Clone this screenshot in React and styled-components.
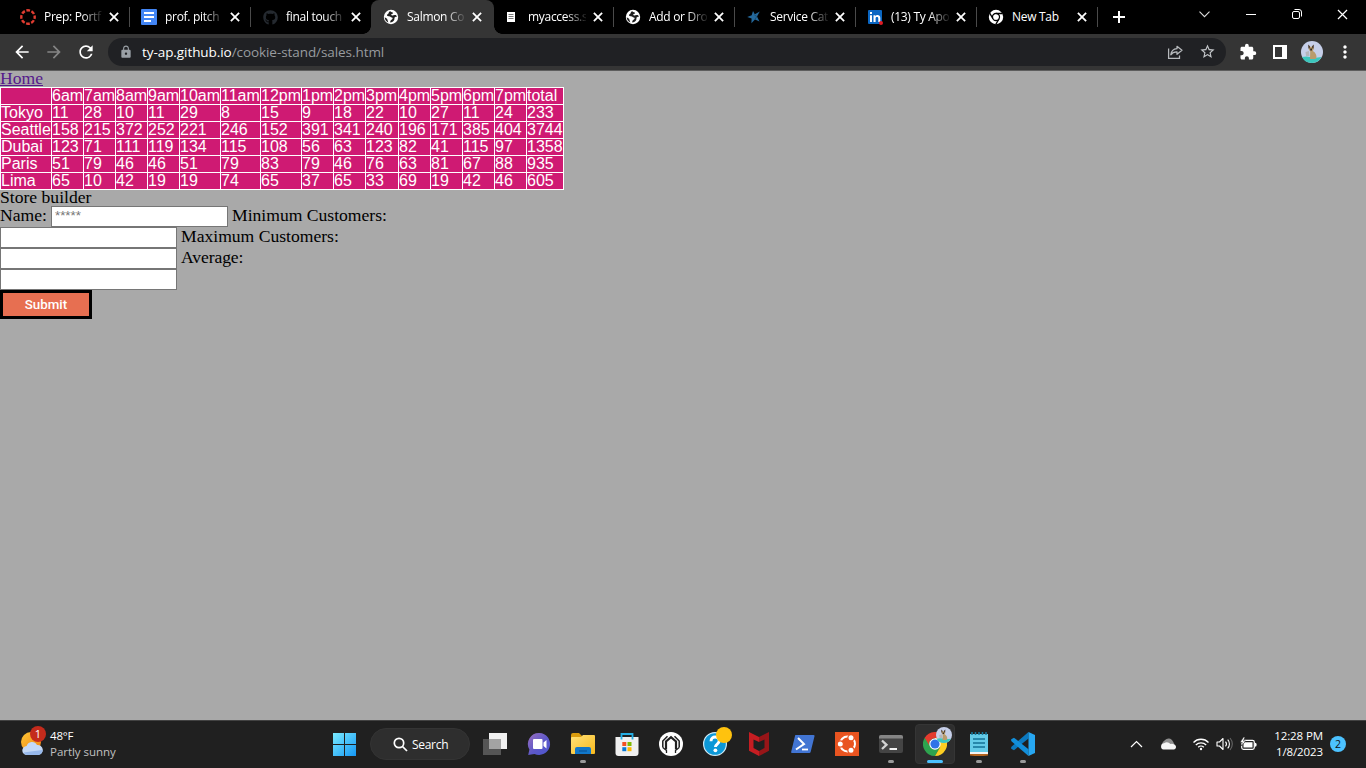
import React from "react";
import styled, { createGlobalStyle, css } from "styled-components";
import { MdExtension, MdStarBorder, MdLock, MdRefresh, MdArrowBack, MdArrowForward, MdMoreVert } from "react-icons/md";
import { FaGithub } from "react-icons/fa";

const ui = `"Open Sans", "Noto Sans", sans-serif`;

const GlobalStyle = createGlobalStyle`
  * { box-sizing: border-box; }
  body { margin: 0; background: #a9a9a9; overflow: hidden; }
  svg { display: block; flex: none; }
`;

const Screen = styled.div`
  display: flex;
  flex-direction: column;
  width: 1366px;
  height: 768px;
  overflow: hidden;
  background: #a9a9a9;
`;

/* ---------- browser chrome ---------- */

const TabStrip = styled.div`
  display: flex;
  height: 34px;
  padding-left: 9px;
  background: #000;
`;

const Tab = styled.div`
  position: relative;
  display: flex;
  align-items: center;
  width: 121px;
  height: 34px;
  padding: 0 10px 0 11px;
  color: #fff;
  ${(p) =>
    p.$line &&
    css`
      &::after {
        content: "";
        position: absolute;
        right: 0;
        top: 7px;
        width: 1px;
        height: 20px;
        background: #4a4a4a;
      }
    `}
  ${(p) =>
    p.$active &&
    css`
      background: #353535;
      border-radius: 8px 8px 0 0;
      margin: 0 -1px;
      width: 123px;
      padding: 0 11px 0 12px;
      &::before,
      &::after {
        content: "";
        position: absolute;
        bottom: 0;
        width: 8px;
        height: 8px;
      }
      &::before {
        left: -8px;
        background: radial-gradient(circle at 0 0, transparent 7.5px, #353535 8px);
      }
      &::after {
        right: -8px;
        background: radial-gradient(circle at 100% 0, transparent 7.5px, #353535 8px);
      }
    `}
`;

const Favicon = styled.span`
  display: flex;
  align-items: center;
  justify-content: center;
  width: 16px;
  height: 16px;
  margin-right: 8px;
`;

const TabTitle = styled.span`
  width: 58px;
  white-space: nowrap;
  font: 12px/16px ${ui};
  letter-spacing: -0.3px;
  ${(p) => p.$fade && css`mask-image: linear-gradient(90deg, #000 38px, transparent 60px);`}
`;

const TabClose = styled.span`
  display: flex;
  margin-left: 7px;
`;

const StripButton = styled.span`
  display: flex;
  margin-left: ${(p) => p.$gap}px;
  margin-top: ${(p) => p.$top}px;
`;

const Toolbar = styled.div`
  display: flex;
  align-items: center;
  height: 37px;
  padding: 0 0 1px 12px;
  background: #353535;
  border-bottom: 1px solid #5e5e5e;
  color: #fff;
`;

const NavIcon = styled.span`
  display: flex;
  width: 32px;
  color: ${(p) => (p.$off ? "#858585" : "#fff")};
`;

const AddressBar = styled.div`
  display: flex;
  align-items: center;
  width: 1118px;
  height: 28px;
  padding: 0 10px 0 11px;
  border-radius: 14px;
  background: #202124;
  color: #9aa0a6;
`;

const Url = styled.span`
  flex: 1;
  margin-left: 9px;
  font: 13.5px/20px ${ui};
  letter-spacing: -0.07px;
  color: #989b9f;
  b {
    font-weight: 400;
    color: #fff;
  }
`;

const ToolIcon = styled.span`
  display: flex;
  margin-left: ${(p) => p.$gap}px;
`;

/* ---------- web page ---------- */

const Page = styled.main`
  height: 649px;
  background: #a9a9a9;
  color: #000;
  font: 17.6px/17px "Liberation Serif", serif;
`;

const HomeLink = styled.a`
  display: block;
  width: max-content;
  height: 16px;
  line-height: 14px;
  color: #551a8b;
  text-decoration: underline;
`;

const SalesTable = styled.table`
  table-layout: fixed;
  width: 564px;
  border-spacing: 0;
  border-top: 1px solid #fff;
  border-left: 1px solid #fff;
  background: #cf1a73;
  color: #fff;
  font: 16px/16px "Liberation Sans", Arial, sans-serif;
`;

const Cell = styled.td`
  height: 17px;
  padding: 0;
  border-right: 1px solid #fff;
  border-bottom: 1px solid #fff;
  white-space: nowrap;
`;

const Legend = styled.div`
  height: 16px;
  line-height: 14px;
`;

const FieldRow = styled.div`
  display: flex;
  align-items: center;
  gap: 4px;
  height: 21px;
`;

const Label = styled.label`
  line-height: 18px;
  padding-bottom: 3px;
  width: ${(p) => (p.$w ? p.$w + "px" : "auto")};
  letter-spacing: ${(p) => p.$track || "normal"};
  white-space: nowrap;
`;

const Input = styled.input`
  width: 177px;
  height: 21px;
  padding: 0 2px 2px 3px;
  border: 1px solid #767676;
  background: #fff;
  font: 13.33px "Liberation Sans", Arial, sans-serif;
  outline: none;
  &::placeholder {
    color: #757575;
  }
`;

const Submit = styled.button`
  display: block;
  width: 92px;
  height: 29px;
  padding: 0;
  border: 3px solid #000;
  border-radius: 0;
  background: #e76f51;
  color: #fff;
  font: 500 13.33px Roboto, "Liberation Sans", sans-serif;
`;

/* ---------- taskbar ---------- */

const Taskbar = styled.footer`
  display: flex;
  height: 48px;
  background: #202020;
  border-top: 1px solid #424242;
  color: #fff;
  font: 12px/16px ${ui};
`;

const Weather = styled.div`
  display: flex;
  width: 322px;
  padding: 4px 0 0 20px;
`;

const WeatherText = styled.div`
  margin: 3px 0 0 2px;
  font-size: 11.5px;
  letter-spacing: -0.2px;
  span {
    display: block;
  }
  span + span {
    color: #c0c0c0;
    letter-spacing: -0.03px;
  }
`;

const TaskButton = styled.div`
  position: relative;
  display: flex;
  align-items: center;
  justify-content: center;
  width: 44px;
  height: 46px;
  &::after {
    content: "";
    position: absolute;
    left: ${(p) => (p.$active ? 14 : 19)}px;
    bottom: 4px;
    width: ${(p) => (p.$active ? 16 : 6)}px;
    height: 3px;
    border-radius: 2px;
    background: ${(p) => (p.$active ? "#4cc2ff" : p.$open ? "#9a9a9a" : "transparent")};
  }
  ${(p) =>
    p.$active &&
    css`
      width: 40px;
      height: 40px;
      margin: 3px 2px;
      border-radius: 4px;
      background: #2e2e2e;
      border: 1px solid #353535;
      &::after {
        left: 11px;
        bottom: 0;
      }
    `}
`;

const SearchPill = styled.div`
  display: flex;
  align-items: center;
  gap: 4px;
  width: 100px;
  height: 32px;
  margin: 7px 3px 0 4px;
  padding: 1px 0 0 22px;
  border-radius: 16px;
  background: #2e2e2e;
  border: 1px solid #343434;
  letter-spacing: -0.3px;
`;

const Tray = styled.div`
  display: flex;
  align-items: center;
  margin-left: auto;
  padding-right: 20px;
  height: 46px;
`;

const TrayIcon = styled.span`
  display: flex;
  margin-right: ${(p) => p.$gap}px;
`;

const Clock = styled.div`
  width: 62px;
  text-align: right;
  font-size: 11.5px;
  letter-spacing: -0.1px;
  white-space: nowrap;
`;

const Badge = styled.span`
  width: 16px;
  height: 16px;
  margin-left: 7px;
  border-radius: 50%;
  background: #4cc2ff;
  color: #111;
  text-align: center;
  font: 10.5px/16px ${ui};
`;

/* ---------- icons ---------- */

const Cross = ({ size = 10, w = 1.6 }) => (
  <svg width={size} height={size} viewBox="0 0 9 9" stroke="#fff" strokeWidth={w}>
    <path d="M.8.8 8.2 8.2M8.2.8.8 8.2" />
  </svg>
);

const Globe = () => (
  <svg width="16" height="16" viewBox="0 0 16 16">
    <circle cx="8" cy="8" r="7.2" fill="#fff" />
    <path d="M7.3 2.2C5.200 2.800 6.200 4.500 4.600 5.200 3.300 5.800 4 7.400 5.800 7.300c1.700-.1 1.600 1 3 1.300 1.300.3.900 1.500 0 2-.9.600-1.600.8-1.600 2.900 1.800-.2 3.300-1.100 4-2.600.6-1.300-.2-1.900.7-2.700.5-.5 1.200-.4 2-.5-.3-1.200-1-1.900-2.200-1.700-1.400.2-1.900.8-3.100.3-1-.5-.2-1.300.8-1.500 1-.3.700-1.400-.3-1.500-.8-.1-1.200-.500-1.800-1.100z" fill="#202020" />
    <path d="M1.700 8.300l2 1.200c1 .5.500 1.300 1 2l.6 2.100A6.500 6.500 0 0 1 1.700 8.300z" fill="#202020" />
  </svg>
);

const CanvasLogo = () => (
  <svg width="16" height="16" viewBox="0 0 16 16" fill="none" stroke="#e03c31" strokeWidth="2.4">
    <circle cx="8" cy="8" r="6.7" strokeDasharray="3.7 1.56" strokeDashoffset="1.85" />
  </svg>
);

const DocsLogo = () => (
  <svg width="16" height="16" viewBox="0 0 16 16">
    <rect width="16" height="16" rx="1" fill="#4285f4" />
    <path d="M3 4h10M3 8h10M3 12h7" stroke="#fff" strokeWidth="2" />
  </svg>
);

const PageIcon = () => (
  <svg width="16" height="16" viewBox="0 0 16 16">
    <path d="M3 3h8v10H3z" fill="#fff" />
    <path d="M4.500 5.500h5M4.500 7.500h5M4.500 9.500h5" stroke="#777" strokeWidth="1" />
  </svg>
);

const StarLogo = () => (
  <svg width="16" height="16" viewBox="0 0 16 16" fill="#24699c">
    <path d="M7 2l1.800 3.200L13.800 2.500l-2.800 5L13.500 12.500 9 10.600l-3.600 3.700.2-4.900L1.200 8l4.500-1.700z" />
    <path d="M8.300 5.900l2.600 1.700-2.100 2.800" fill="none" stroke="#164a70" strokeWidth=".8" />
  </svg>
);

const LinkedIn = () => (
  <svg width="16" height="16" viewBox="0 0 16 16">
    <rect x="1" y="1" width="14" height="14" rx="1" fill="#0a66c2" />
    <path d="M3 6.200h2V13H3zM3 3h2v2H3zM6.500 6.200h1.900v1c1-1.700 4.900-1.700 4.900 1.700V13h-2V9.400c0-2-2.700-1.900-2.700 0V13H6.500z" fill="#fff" />
    <circle cx="14" cy="14" r="2" fill="#e01b24" />
  </svg>
);

const ChromeMono = () => (
  <svg width="16" height="16" viewBox="0 0 16 16">
    <circle cx="8" cy="8" r="7.200" fill="#fff" />
    <g stroke="#000" strokeWidth="1.300" fill="none">
      <circle cx="8" cy="8" r="3.500" />
      <path d="M8 4.500h6.400M4.900 9.700 1.700 4.200M11 9.800l-3.200 5.500" />
    </g>
    <circle cx="8" cy="8" r="2.400" fill="#fff" />
  </svg>
);

const Avatar = ({ size }) => (
  <svg width={size} height={size} viewBox="0 0 22 22">
    <circle cx="11" cy="11" r="11" fill="#c6cfe9" />
    <path d="M1 16Q7 14.500 13 17l7.500-1A11 11 0 0 1 1 16z" fill="#3cc7bd" />
    <path d="M4.500 11l3.500-1 .5 5H5z" fill="#b3b5bb" />
    <path d="M7.500 4l1.500 1.700h1.800L12.500 4l.2 4-.8 2c2.600 1.500 3.800 4 3.600 6.500l-1 1.500H9L9.200 10.500 7.800 8.500z" fill="#b99c6c" />
    <path d="M7.200 3.400l1.700 1.900L8.700 7.500H7.500zM12.800 3.400l-1.700 1.900.2 2.200h1.200z" fill="#3f322b" />
    <path d="M9.200 7.600h1.800v2H9.200z" fill="#2f2927" />
  </svg>
);

const Share = () => (
  <svg width="17" height="16" viewBox="0 0 17 16" fill="none" stroke="#b7babd" strokeWidth="1.250">
    <path d="M1.600 4.500V14.400H12.500V11.500" />
    <path d="M10 2.300l5 4-5 4V7.900C7 7.800 5.200 8.700 3.800 10.800 4.300 7 6.500 5 10 4.700z" strokeLinejoin="round" />
  </svg>
);

const Windows = () => (
  <svg width="24" height="24" viewBox="0 0 24 24">
    <defs>
      <linearGradient id="win" x1="0" y1="0" x2="1" y2="1" gradientUnits="objectBoundingBox">
        <stop stopColor="#7aebff" />
        <stop offset="1" stopColor="#1597f5" />
      </linearGradient>
    </defs>
    <path d="M1 1h11v11H1zM13 1h11v11H13zM1 13h11v11H1zM13 13h11v11H13z" fill="url(#win)" />
  </svg>
);

const TaskView = () => (
  <svg width="26" height="24" viewBox="0 0 26 24">
    <path d="M7 1h18v16H7z" fill="#f0f0f0" />
    <path d="M1 7h18v16H1z" fill="#555" />
    <path d="M7 7h12v10H7z" fill="#a3a3a3" />
  </svg>
);

const Chat = () => (
  <svg width="24" height="24" viewBox="0 0 24 24">
    <defs>
      <linearGradient id="chat" x1="0" y1="0" x2="1" y2="1">
        <stop stopColor="#9a6fc0" />
        <stop offset=".55" stopColor="#5d58c8" />
        <stop offset="1" stopColor="#4c56cf" />
      </linearGradient>
    </defs>
    <path d="M12.500 1a11 11 0 1 1-5 21L1.200 23l1.200-5.500A11 11 0 0 1 12.500 1z" fill="url(#chat)" />
    <rect x="6" y="7" width="9.500" height="10" rx="1" fill="#fff" />
    <path d="M16.500 10.500l3-2.500v8.500l-3-2.500z" fill="#fff" />
  </svg>
);

const Folder = () => (
  <svg width="24" height="24" viewBox="0 0 24 24">
    <path d="M0 3q0-2 2-2h6l3 3v5H0z" fill="#d99b0d" />
    <path d="M0 6q0-1 1-1h9l2-2h11q1 0 1 1v17q0 1-1 1H1q-1 0-1-1z" fill="url(#folder)" />
    <path d="M4 22v-5q0-2 2-2h12q2 0 2 2v5z" fill="#1177c9" />
    <path d="M8 19h8" stroke="#0a5599" strokeWidth="1.200" />
    <defs>
      <linearGradient id="folder" x1="0" y1="0" x2="1" y2="1">
        <stop stopColor="#ffe27a" />
        <stop offset="1" stopColor="#f8b91c" />
      </linearGradient>
    </defs>
  </svg>
);

const Store = () => (
  <svg width="24" height="24" viewBox="0 0 24 24">
    <path d="M.5 5h23v16q0 3-3 3h-17q-3 0-3-3z" fill="#f0f0f0" />
    <path d="M6.500 7.500V2h11v5.500" fill="none" stroke="#25aee4" strokeWidth="1.800" />
    <path d="M7.300 10h4v4h-4z" fill="#f25022" />
    <path d="M12.500 10h4v4h-4z" fill="#7fba00" />
    <path d="M7.300 15.200h4v4h-4z" fill="#0a78d4" />
    <path d="M12.500 15.200h4v4h-4z" fill="#ffb900" />
  </svg>
);

const HexApp = () => (
  <svg width="24" height="24" viewBox="0 0 24 24">
    <circle cx="12" cy="12" r="12" fill="#fff" />
    <path d="M3.800 15.500V9L8.500 4.300M20.200 15.500V9l-4.700-4.700" fill="none" stroke="#202020" strokeWidth="1.500" />
    <path d="M7 17.500V9.500L12 5.200l5 4.300v8" fill="none" stroke="#202020" strokeWidth="2.200" />
    <path d="M3.800 15.500L7.500 18.500v2.500M20.200 15.500L16.500 18.500v2.500" fill="none" stroke="#202020" strokeWidth="1.300" />
  </svg>
);

const Help = () => (
  <svg width="34" height="34" viewBox="0 0 34 34">
    <circle cx="17" cy="17" r="11.400" fill="#0c98d7" stroke="#cfeaf6" strokeWidth="1.200" />
    <path d="M13 14.200c0-5.800 8.200-5.200 8.200-.4 0 3.300-3.800 3.200-3.800 6.200" fill="none" stroke="#fff" strokeWidth="2.900" />
    <circle cx="17.400" cy="23.300" r="1.900" fill="#fff" />
    <circle cx="26" cy="8" r="8" fill="#ffc20e" />
  </svg>
);

const McAfee = () => (
  <svg width="22" height="24" viewBox="0 0 22 24">
    <path d="M1 0l10 5v5L5.500 7.500v8.500l5.500 3V24L1 18.800z" fill="#c61d22" />
    <path d="M21 0L11 5v5l5.500-2.500v8.500l-5.500 3V24l10-5.200z" fill="#981518" />
  </svg>
);

const PowerShell = () => (
  <svg width="24" height="20" viewBox="0 0 24 20">
    <path d="M4.500 1h18q1.300 0 1 1.200l-3.800 15.600q-.3 1.200-1.500 1.200H1q-1.200 0-.8-1.200L4 2q.2-1 .5-1z" fill="#4275d3" />
    <path d="M7 4l6 6-8 5.500" fill="none" stroke="#fff" strokeWidth="2" />
    <path d="M11 15.500h6" stroke="#fff" strokeWidth="1.800" />
  </svg>
);

const Ubuntu = () => (
  <svg width="24" height="24" viewBox="0 0 24 24">
    <path d="M0 0h24v24H0z" fill="#e95420" />
    <circle cx="12.500" cy="12" r="7.500" fill="none" stroke="#fff" strokeWidth="2" />
    <g fill="#fff" stroke="#e95420" strokeWidth="1.200">
      <circle cx="5.300" cy="12" r="3.100" />
      <circle cx="16" cy="5.800" r="3.100" />
      <circle cx="16" cy="18.200" r="3.100" />
    </g>
  </svg>
);

const Terminal = () => (
  <svg width="24" height="20" viewBox="0 0 24 20">
    <path d="M0 3q0-2 2-2h20q2 0 2 2v14q0 2-2 2H2q-2 0-2-2z" fill="#444" />
    <path d="M0 3q0-2 2-2h20q2 0 2 2v1.500H0z" fill="#858585" />
    <path d="M3 6.500l4.500 4.300L3 15" fill="none" stroke="#d4d4d4" strokeWidth="2.300" />
    <path d="M10.500 15H18" stroke="#f2f2f2" strokeWidth="2" />
  </svg>
);

const ChromeColor = () => (
  <svg width="24" height="24" viewBox="0 0 24 24">
    <path d="M12 12L1.600 6A12 12 0 0 0 12 24l5.200-9z" fill="#2ea44f" />
    <path d="M12 12l5.200 3L12 24A12 12 0 0 0 22.400 6H12z" fill="#fdce22" />
    <path d="M1.600 6A12 12 0 0 1 22.400 6H12a6 6 0 0 0-5.500 4z" fill="#e33b2e" />
    <path d="M1.600 6L6.800 15 8 9z" fill="#2ea44f" />
    <path d="M1.700 5.800L6 13a6 6 0 0 1 6-7z" fill="#e33b2e" />
    <circle cx="12" cy="12" r="5.700" fill="#fff" />
    <circle cx="12" cy="12" r="4.600" fill="#2f73e8" />
  </svg>
);

const AvatarBadge = styled.span`
  position: absolute;
  right: 2px;
  top: 2px;
`;

const Notepad = () => (
  <svg width="20" height="24" viewBox="0 0 20 24">
    <path d="M1 2h18v19H1z" fill="#64cbe8" />
    <path d="M1 20h18v2.500H1z" fill="#f3f3f3" />
    <path d="M1 22h18v1.500q-9 1-18 0z" fill="#b4641f" />
    <path d="M3 0v3M6.500 0v3M10 0v3M13.500 0v3M17 0v3" stroke="#16799d" strokeWidth="1.500" />
    <path d="M4 7h12M4 11h12M4 15h12" stroke="#137396" strokeWidth="1.600" />
  </svg>
);

const VSCode = () => (
  <svg width="24" height="24" viewBox="0 0 24 24">
    <path d="M17.500 0v6.500L3 18.200.2 16.700V15z" fill="#0b79c0" />
    <path d="M.2 7.200L3 5.700l14.500 11.500V24L.2 9z" fill="#128fdb" />
    <path d="M17.500 0L24 3v18l-6.500 3z" fill="#27a7f2" />
  </svg>
);

const Sun = () => (
  <svg width="28" height="32" viewBox="0 0 28 32">
    <defs>
      <linearGradient id="sun" x1="0" y1="0" x2="1" y2="1">
        <stop stopColor="#ffc735" />
        <stop offset="1" stopColor="#ee7f13" />
      </linearGradient>
    </defs>
    <circle cx="11" cy="17" r="10" fill="url(#sun)" />
    <path d="M7 30a4.500 4.500 0 0 1-.4-9A5.600 5.600 0 0 1 17 20a5 5 0 0 1 1.500 10z" fill="#c4d9f7" />
    <path d="M3.500 27.500q9-1.500 19-2.500a5 5 0 0 1-4 5H7q-2.500-.3-3.500-2.500z" fill="#97b9ec" />
    <circle cx="18" cy="9" r="8" fill="#c42b1c" />
    <text x="18" y="13" textAnchor="middle" fill="#fff" fontSize="11" fontFamily="Open Sans">1</text>
  </svg>
);

const Cloud = () => (
  <svg width="17" height="12" viewBox="0 0 17 12">
    <path d="M2.500 7a4 4 0 0 1 2-4.500 5 5 0 0 1 8.500 1l2 4z" fill="#8e8e8e" />
    <path d="M3.500 11.500a3.200 3.200 0 0 1 .5-6.300 5.200 5.200 0 0 1 6.500.8 4 4 0 0 1 3.700.5 2.600 2.600 0 0 1 0 5z" fill="#f5f5f5" />
  </svg>
);

const Wifi = () => (
  <svg width="18" height="14" viewBox="0 0 18 14" fill="none" stroke="#fff" strokeWidth="1.300">
    <path d="M1.500 5.500a10.300 10.300 0 0 1 15 0M3.800 8a7.200 7.200 0 0 1 10.400 0M6.200 10.300a4 4 0 0 1 5.600 0" />
    <circle cx="9" cy="12" r="1.200" fill="#fff" stroke="none" />
  </svg>
);

const Volume = () => (
  <svg width="18" height="14" viewBox="0 0 18 14" fill="none" stroke="#fff" strokeWidth="1.100">
    <path d="M1 5v4h2.500L7 12.500v-11L3.500 5z" strokeLinejoin="round" />
    <path d="M9.500 4.700a3.500 3.500 0 0 1 0 4.600M11.700 2.700a6.200 6.200 0 0 1 0 8.600" />
    <path d="M14 1a9 9 0 0 1 0 12" stroke="#666" />
  </svg>
);

const Battery = () => (
  <svg width="17" height="15" viewBox="0 0 17 15">
    <rect x="1.700" y="3.300" width="12.600" height="9" rx="1.800" fill="none" stroke="#fff" strokeWidth="1.200" />
    <path d="M3.500 5.200h9v5.200h-9zM15 5.800q1.700 0 1.700 2t-1.700 2z" fill="#fff" />
    <path d="M3.500 0L0 5.500h2.200L1.500 9 5.700 4H3.500L5 0z" fill="#fff" stroke="#202020" strokeWidth=".6" />
  </svg>
);

/* ---------- data ---------- */

const tabs = [
  { title: "Prep: Portf", icon: <CanvasLogo />, line: true },
  { title: "prof. pitch", icon: <DocsLogo />, line: true },
  { title: "final touch", icon: <FaGithub size={15} color="#24292f" /> },
  { title: "Salmon Co", icon: <Globe />, active: true },
  { title: "myaccess.s", icon: <PageIcon />, line: true },
  { title: "Add or Dro", icon: <Globe />, line: true },
  { title: "Service Cat", icon: <StarLogo />, line: true },
  { title: "(13) Ty Apo", icon: <LinkedIn />, line: true },
  { title: "New Tab", icon: <ChromeMono />, line: true, whole: true },
];

const columnWidths = [51, 32, 32, 32, 32, 41, 40, 41, 32, 32, 33, 32, 32, 32, 32, 37];

const rows = [
  ["", "6am", "7am", "8am", "9am", "10am", "11am", "12pm", "1pm", "2pm", "3pm", "4pm", "5pm", "6pm", "7pm", "total"],
  ["Tokyo", 11, 28, 10, 11, 29, 8, 15, 9, 18, 22, 10, 27, 11, 24, 233],
  ["Seattle", 158, 215, 372, 252, 221, 246, 152, 391, 341, 240, 196, 171, 385, 404, 3744],
  ["Dubai", 123, 71, 111, 119, 134, 115, 108, 56, 63, 123, 82, 41, 115, 97, 1358],
  ["Paris", 51, 79, 46, 46, 51, 79, 83, 79, 46, 76, 63, 81, 67, 88, 935],
  ["Lima", 65, 10, 42, 19, 19, 74, 65, 37, 65, 33, 69, 19, 42, 46, 605],
];

export default function App() {
  return (
    <Screen>
      <GlobalStyle />
      <TabStrip>
        {tabs.map((t, i) => (
          <Tab key={i} $active={t.active} $line={t.line}>
            <Favicon>{t.icon}</Favicon>
            <TabTitle $fade={!t.whole}>{t.title}</TabTitle>
            <TabClose><Cross /></TabClose>
          </Tab>
        ))}
        <StripButton $gap={15} $top={11}>
          <svg width="12" height="12" stroke="#fff" strokeWidth="2"><path d="M6 0v12M0 6h12" /></svg>
        </StripButton>
        <StripButton $gap={74} $top={11}>
          <svg width="11" height="7" fill="none" stroke="#ddd" strokeWidth="1.1"><path d="M.5.7l5 5 5-5" /></svg>
        </StripButton>
        <StripButton $gap={36} $top={14}>
          <svg width="10" height="1"><path d="M0 0h10v1H0z" fill="#fff" /></svg>
        </StripButton>
        <StripButton $gap={36} $top={9}>
          <svg width="10" height="10" fill="none" stroke="#fff"><rect x=".5" y="2.500" width="7" height="7" rx="1.500" /><path d="M2.500.5H7q2.500 0 2.500 2.500v4.500" /></svg>
        </StripButton>
        <StripButton $gap={35} $top={9}><Cross size={11} w={1} /></StripButton>
      </TabStrip>

      <Toolbar>
        <NavIcon><MdArrowBack size={20} /></NavIcon>
        <NavIcon $off><MdArrowForward size={20} /></NavIcon>
        <NavIcon><MdRefresh size={20} /></NavIcon>
        <AddressBar>
          <MdLock size={14} />
          <Url><b>ty-ap.github.io</b>/cookie-stand/sales.html</Url>
          <Share />
          <ToolIcon $gap={15}><MdStarBorder size={17} color="#c4c7ca" /></ToolIcon>
        </AddressBar>
        <ToolIcon $gap={13}><MdExtension size={18} /></ToolIcon>
        <ToolIcon $gap={16}>
          <svg width="14" height="14"><path d="M0 0h14v14H0z" fill="#fff" /><path d="M2 2h7v10H2z" fill="#353535" /></svg>
        </ToolIcon>
        <ToolIcon $gap={14}><Avatar size={22} /></ToolIcon>
        <ToolIcon $gap={12}><MdMoreVert size={20} /></ToolIcon>
      </Toolbar>

      <Page>
        <HomeLink>Home</HomeLink>
        <SalesTable>
          <colgroup>
            {columnWidths.map((w, i) => <col key={i} width={w} />)}
          </colgroup>
          <tbody>
            {rows.map((r, i) => (
              <tr key={i}>{r.map((v, j) => <Cell key={j}>{v}</Cell>)}</tr>
            ))}
          </tbody>
        </SalesTable>
        <Legend>Store builder</Legend>
        <FieldRow>
          <Label $w={47}>Name:</Label>
          <Input placeholder="*****" />
          <Label>Minimum Customers:</Label>
        </FieldRow>
        <FieldRow><Input /><Label>Maximum Customers:</Label></FieldRow>
        <FieldRow><Input /><Label $track="-0.1px">Average:</Label></FieldRow>
        <FieldRow><Input /></FieldRow>
        <Submit>Submit</Submit>
      </Page>

      <Taskbar>
        <Weather>
          <Sun />
          <WeatherText><span>48°F</span><span>Partly sunny</span></WeatherText>
        </Weather>
        <TaskButton><Windows /></TaskButton>
        <SearchPill>
          <svg width="15" height="15" fill="none" stroke="#fff" strokeWidth="1.700"><circle cx="6" cy="6" r="4.700" /><path d="M9.500 9.500l4.500 4.500" /></svg>
          Search
        </SearchPill>
        <TaskButton><TaskView /></TaskButton>
        <TaskButton><Chat /></TaskButton>
        <TaskButton $open><Folder /></TaskButton>
        <TaskButton><Store /></TaskButton>
        <TaskButton><HexApp /></TaskButton>
        <TaskButton><Help /></TaskButton>
        <TaskButton><McAfee /></TaskButton>
        <TaskButton><PowerShell /></TaskButton>
        <TaskButton><Ubuntu /></TaskButton>
        <TaskButton $open><Terminal /></TaskButton>
        <TaskButton $active>
          <ChromeColor />
          <AvatarBadge><Avatar size={16} /></AvatarBadge>
        </TaskButton>
        <TaskButton $open><Notepad /></TaskButton>
        <TaskButton $open><VSCode /></TaskButton>
        <Tray>
          <TrayIcon $gap={17}>
            <svg width="13" height="8" fill="none" stroke="#fff" strokeWidth="1.200"><path d="M1 7l5.500-5.500L12 7" /></svg>
          </TrayIcon>
          <TrayIcon $gap={15}><Cloud /></TrayIcon>
          <TrayIcon $gap={6}><Wifi /></TrayIcon>
          <TrayIcon $gap={6}><Volume /></TrayIcon>
          <TrayIcon $gap={4}><Battery /></TrayIcon>
          <Clock>12:28 PM<br />1/8/2023</Clock>
          <Badge>2</Badge>
        </Tray>
      </Taskbar>
    </Screen>
  );
}
